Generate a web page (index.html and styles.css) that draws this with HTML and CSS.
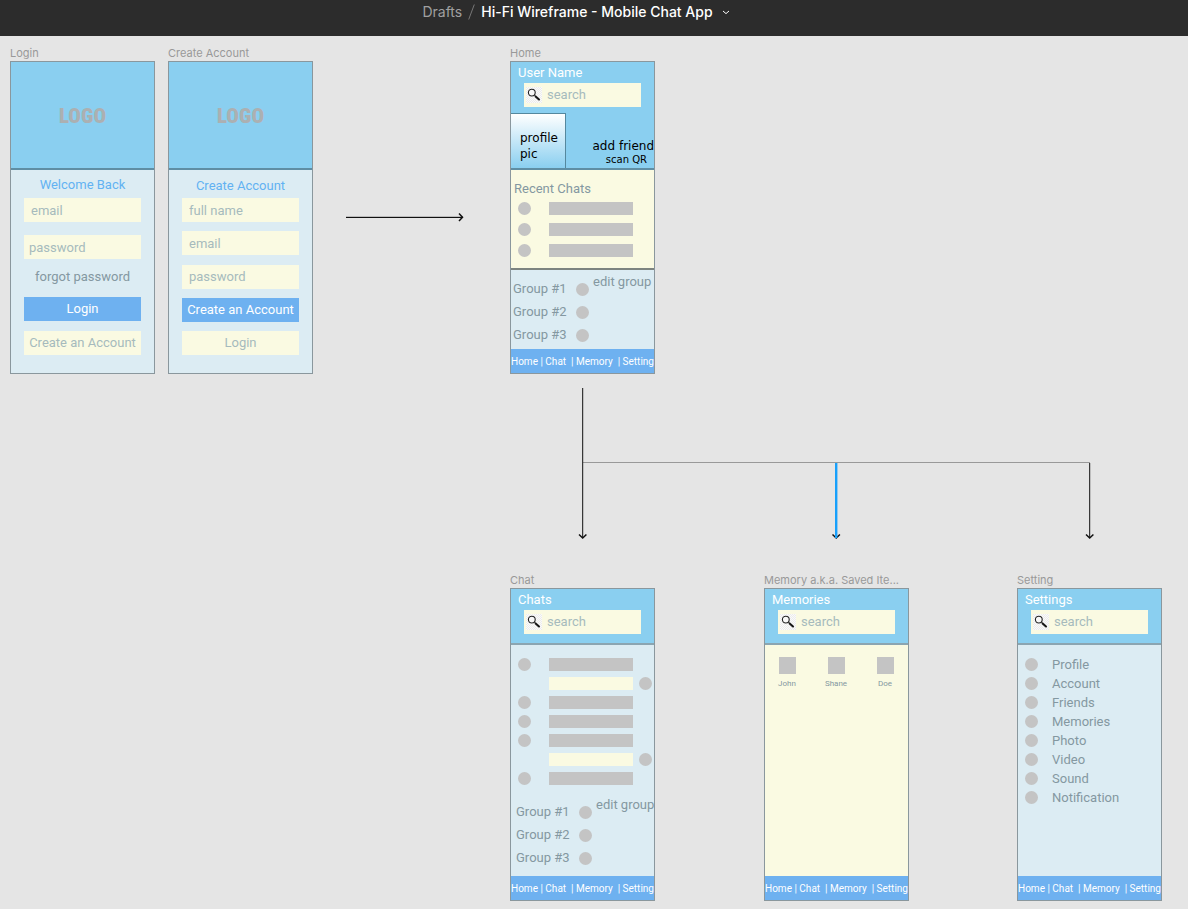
FILE: index.html
```html
<!DOCTYPE html>
<html lang="en">
<head>
<meta charset="utf-8">
<title>Hi-Fi Wireframe - Mobile Chat App</title>
<link rel="stylesheet" href="styles.css">
</head>
<body>
<svg class="defs" aria-hidden="true">
  <defs>
    <pattern id="checker" width="2" height="2" patternUnits="userSpaceOnUse">
      <rect width="2" height="2" fill="#fafafa"/>
      <rect width="1" height="1" fill="#ececec"/>
      <rect x="1" y="1" width="1" height="1" fill="#ececec"/>
    </pattern>
    <symbol id="magnifier" viewBox="0 0 16 16">
      <rect width="16" height="16" fill="url(#checker)"/>
      <circle cx="5.8" cy="5.6" r="3.4" fill="#f8f8f8" stroke="#222" stroke-width="1.1"/>
      <path d="M8.2 8.1l1.6 1.5" stroke="#333" stroke-width="1"/>
      <path d="M9.6 9.4l3.4 3.1" stroke="#151515" stroke-width="2" stroke-linecap="round"/>
    </symbol>
  </defs>
</svg>
<header class="topbar">
  <a class="crumb" href="#">Drafts</a>
  <svg class="slash" viewBox="0 0 7 16" aria-hidden="true"><path d="M6.3 .5L.7 15.5"/></svg>
  <button class="file-name" type="button">Hi-Fi Wireframe - Mobile Chat App
    <svg class="chevron" viewBox="0 0 8 5" aria-hidden="true"><path d="M1 1l3 2.6L7 1"/></svg>
  </button>
</header>

<main class="canvas">
  <svg class="connectors" viewBox="0 0 1188 873" aria-hidden="true">
    <path class="soft" d="M346 180.5H463"/>
    <path class="ink" d="M346 181.5H463"/>
    <path class="tip" d="M459 177.500l3.500 3.700-3.500 3.700"/>
    <path class="branch" d="M583 426.5H1090"/>
    <path class="ink" d="M582.700 352V502M1089.700 427V502"/>
    <path class="tip" d="M579 498.500l3.700 3.500 3.700-3.500"/>
    <path class="tip" d="M1086 498.500l3.700 3.500 3.700-3.500"/>
    <path class="tip" d="M832.500 498.500l3.700 3.500 3.700-3.500"/>
    <path class="selected" d="M836.200 427V502"/>
  </svg>

  <section class="node at-login">
    <h2 class="label">Login</h2>
    <div class="board">
      <div class="hero">LOGO</div>
      <form class="form login">
        <h3>Welcome Back</h3>
        <input class="field" type="email" placeholder="email" aria-label="email">
        <input class="field snug" type="password" placeholder="password" aria-label="password">
        <a class="forgot" href="#">forgot password</a>
        <button class="primary" type="button">Login</button>
        <button class="secondary" type="button">Create an Account</button>
      </form>
    </div>
  </section>

  <section class="node at-create">
    <h2 class="label">Create Account</h2>
    <div class="board">
      <div class="hero">LOGO</div>
      <form class="form signup">
        <h3>Create Account</h3>
        <div class="spread">
          <input class="field" type="text" placeholder="full name" aria-label="full name">
          <input class="field" type="email" placeholder="email" aria-label="email">
          <input class="field" type="password" placeholder="password" aria-label="password">
          <button class="primary" type="button">Create an Account</button>
          <button class="secondary" type="button">Login</button>
        </div>
      </form>
    </div>
  </section>

  <section class="node at-home">
    <h2 class="label">Home</h2>
    <div class="board">
      <div class="head tall">
        <h3>User Name</h3>
        <label class="search"><svg><use href="#magnifier"/></svg><input type="search" placeholder="search" aria-label="search"></label>
        <div class="profile">
          <div class="pic">profile<br>pic</div>
          <div class="friend"><a href="#">add friend</a><a class="scan" href="#">scan QR</a></div>
        </div>
      </div>
      <div class="recent">
        <h4>Recent Chats</h4>
        <ul class="messages">
          <li><i class="dot"></i><i class="bar"></i></li>
          <li><i class="dot"></i><i class="bar"></i></li>
          <li><i class="dot"></i><i class="bar"></i></li>
        </ul>
      </div>
      <div class="groups">
        <ul>
          <li>Group #1<i class="dot"></i></li>
          <li>Group #2<i class="dot"></i></li>
          <li>Group #3<i class="dot"></i></li>
        </ul>
        <a href="#">edit group</a>
      </div>
      <nav class="tabs"><a href="#">Home</a> | <a href="#">Chat</a>  | <a href="#">Memory</a>  | <a href="#">Setting</a></nav>
    </div>
  </section>

  <section class="node at-chat">
    <h2 class="label">Chat</h2>
    <div class="board">
      <div class="head">
        <h3>Chats</h3>
        <label class="search"><svg><use href="#magnifier"/></svg><input type="search" placeholder="search" aria-label="search"></label>
      </div>
      <ul class="messages thread">
        <li><i class="dot"></i><i class="bar"></i></li>
        <li class="own"><i class="bar"></i><i class="dot"></i></li>
        <li><i class="dot"></i><i class="bar"></i></li>
        <li><i class="dot"></i><i class="bar"></i></li>
        <li><i class="dot"></i><i class="bar"></i></li>
        <li class="own"><i class="bar"></i><i class="dot"></i></li>
        <li><i class="dot"></i><i class="bar"></i></li>
      </ul>
      <div class="groups inset">
        <ul>
          <li>Group #1<i class="dot"></i></li>
          <li>Group #2<i class="dot"></i></li>
          <li>Group #3<i class="dot"></i></li>
        </ul>
        <a href="#">edit group</a>
      </div>
      <nav class="tabs"><a href="#">Home</a> | <a href="#">Chat</a>  | <a href="#">Memory</a>  | <a href="#">Setting</a></nav>
    </div>
  </section>

  <section class="node at-memory">
    <h2 class="label">Memory a.k.a. Saved Ite...</h2>
    <div class="board">
      <div class="head">
        <h3>Memories</h3>
        <label class="search"><svg><use href="#magnifier"/></svg><input type="search" placeholder="search" aria-label="search"></label>
      </div>
      <ul class="albums">
        <li><i class="thumb"></i>John</li>
        <li><i class="thumb"></i>Shane</li>
        <li><i class="thumb"></i>Doe</li>
      </ul>
      <nav class="tabs"><a href="#">Home</a> | <a href="#">Chat</a>  | <a href="#">Memory</a>  | <a href="#">Setting</a></nav>
    </div>
  </section>

  <section class="node at-setting">
    <h2 class="label">Setting</h2>
    <div class="board">
      <div class="head">
        <h3>Settings</h3>
        <label class="search"><svg><use href="#magnifier"/></svg><input type="search" placeholder="search" aria-label="search"></label>
      </div>
      <ul class="options">
        <li><i class="dot"></i>Profile</li>
        <li><i class="dot"></i>Account</li>
        <li><i class="dot"></i>Friends</li>
        <li><i class="dot"></i>Memories</li>
        <li><i class="dot"></i>Photo</li>
        <li><i class="dot"></i>Video</li>
        <li><i class="dot"></i>Sound</li>
        <li><i class="dot"></i>Notification</li>
      </ul>
      <nav class="tabs"><a href="#">Home</a> | <a href="#">Chat</a>  | <a href="#">Memory</a>  | <a href="#">Setting</a></nav>
    </div>
  </section>
</main>
</body>
</html>
```
FILE: styles.css
```css
* { box-sizing: border-box; }

body {
  margin: 0;
  min-height: 100vh;
  display: flex;
  flex-direction: column;
  background: #e5e5e5;
  font: 13px/16px Roboto, sans-serif;
}

h2, h3, h4, ul { margin: 0; padding: 0; font: inherit; }
ul { list-style: none; }
a { color: inherit; text-decoration: none; }
input, button { border: 0; border-radius: 0; margin: 0; font: inherit; }
.defs { position: absolute; width: 0; height: 0; }

/* Title bar */
.topbar {
  display: flex;
  justify-content: center;
  align-items: flex-start;
  height: 36px;
  padding: 4px 36px 0 0;
  background: #2c2c2c;
  color: #fff;
  font: 14px/16px Inter, sans-serif;
}
.crumb { color: #a0a0a0; }
.slash { width: 7px; height: 16px; margin: 0 6px; fill: none; stroke: #777; }
.file-name {
  display: flex;
  align-items: center;
  gap: 9px;
  padding: 0;
  background: none;
  color: #fff;
  font-weight: 500;
}
.chevron { width: 8px; height: 5px; fill: none; stroke: #fff; }

/* Canvas */
.canvas { position: relative; flex: 1; min-height: 872px; }
.connectors { position: absolute; left: 0; top: 0; width: 1188px; height: 873px; fill: none; }
.ink { stroke: #111; }
.tip { stroke: #111; stroke-width: 1.5; }
.soft { stroke: #bbb; }
.branch { stroke: #999; }
.selected { stroke: #18a0fb; stroke-width: 2.4; }

.node { position: absolute; width: 145px; }
.at-login { left: 10px; top: 9px; }
.at-create { left: 168px; top: 9px; }
.at-home { left: 510px; top: 9px; }
.at-chat { left: 510px; top: 536px; }
.at-memory { left: 764px; top: 536px; }
.at-setting { left: 1017px; top: 536px; }

.label { color: #999; font: 11px/16px Inter, sans-serif; white-space: nowrap; }
.board {
  display: flex;
  flex-direction: column;
  min-height: 313px;
  border: 1px solid #8a979d;
  background: #dcecf3;
  color: #8498a1;
}

/* Login and sign-up */
.hero {
  display: flex;
  align-items: center;
  justify-content: center;
  height: 108px;
  padding-top: 2px;
  border-bottom: 2px solid #5f8ea4;
  background: #8acff0;
  color: #acb0b2;
  font: 900 21px/24px "Liberation Sans Narrow", "Roboto Condensed", "Open Sans Condensed", "DejaVu Sans Condensed", sans-serif;
}
.form { flex: 1; display: flex; flex-direction: column; padding: 7px 13px 18px; }
.form h3 { color: #62b2f2; text-align: center; }
.field, .primary, .secondary { width: 100%; height: 24px; }
.field { padding: 0 7px; background: #fafae2; }
.snug { padding: 0 5px; }
.field::placeholder, .search input::placeholder { color: #a6babd; opacity: 1; }
.primary { padding: 0; background: #6eb1f0; color: #fff; }
.secondary { padding: 0; background: #fafae2; color: #a6babd; }
.login .field { margin: 5px 0 8px; }
.forgot { margin: 2px 0 12px; text-align: center; }
.login .secondary { margin-top: 10px; }
.signup { padding-top: 8px; gap: 4px; }
.spread { flex: 1; display: flex; flex-direction: column; justify-content: space-between; }

/* Screen header with search */
.head { padding: 3px 0 9px; border-bottom: 2px solid #8ba5b1; background: #8acff0; }
.head h3 { padding-left: 7px; color: #fff; }
.search {
  display: flex;
  align-items: center;
  height: 24px;
  margin: 2px 13px 0;
  padding-left: 2px;
  background: #fafae2;
}
.search svg { flex: none; width: 16px; height: 16px; }
.search input { width: 100%; padding: 0 0 0 5px; background: none; }

.tall { padding-bottom: 0; border-color: #5f8ea4; }
.profile { display: flex; justify-content: space-between; margin-top: 6px; color: #000; font: 12px/16px "DejaVu Sans", sans-serif; }
.pic {
  width: 55px;
  height: 55px;
  padding: 16px 0 0 9px;
  border: solid #55889e;
  border-width: 1px 1px 0 0;
  background: linear-gradient(#fff, #8acff0);
}
.friend { display: flex; flex-direction: column; align-items: flex-end; padding-top: 25px; }
.scan { padding-right: 7px; font-size: 10px; line-height: 12px; }

/* Placeholder shapes */
.dot { flex: none; width: 13px; height: 13px; border-radius: 50%; background: #c4c4c4; }
.bar { flex: none; width: 84px; height: 13px; background: #c4c4c4; }
.own .bar { background: #fafae2; }

.recent { padding: 11px 0 11px; border-bottom: 2px solid #7d8480; background: #fafae2; }
.recent h4 { padding-left: 3px; }
.messages { display: flex; flex-direction: column; gap: 8px; padding: 5px 2px 0 7px; }
.messages li { display: flex; gap: 18px; }
.messages .own { justify-content: flex-end; gap: 6px; }
.thread { gap: 6px; padding-top: 13px; }

.groups { flex: 1; display: flex; gap: 4px; padding: 4px 0 0 2px; white-space: nowrap; }
.groups ul { display: flex; flex-direction: column; gap: 7px; padding-top: 7px; }
.groups li { display: flex; align-items: center; justify-content: space-between; width: 76px; }
.inset { padding: 12px 0 0 5px; }

.tabs {
  height: 24px;
  margin-top: auto;
  padding-top: 1px;
  background: #6eb1f0;
  color: #fff;
  font-size: 10px;
  line-height: 24px;
  text-align: center;
  white-space: pre;
}

.albums {
  flex: 1;
  display: flex;
  justify-content: space-between;
  padding: 12px 8px 0 7px;
  background: #fafae2;
  font-size: 8px;
}
.albums li { display: flex; flex-direction: column; align-items: center; width: 30px; gap: 2px; }
.thumb { width: 17px; height: 17px; background: #c4c4c4; }

.options { display: flex; flex-direction: column; gap: 3px; padding: 12px 7px 0; }
.options li { display: flex; gap: 14px; }
.options .dot { margin-top: 1px; }
```
